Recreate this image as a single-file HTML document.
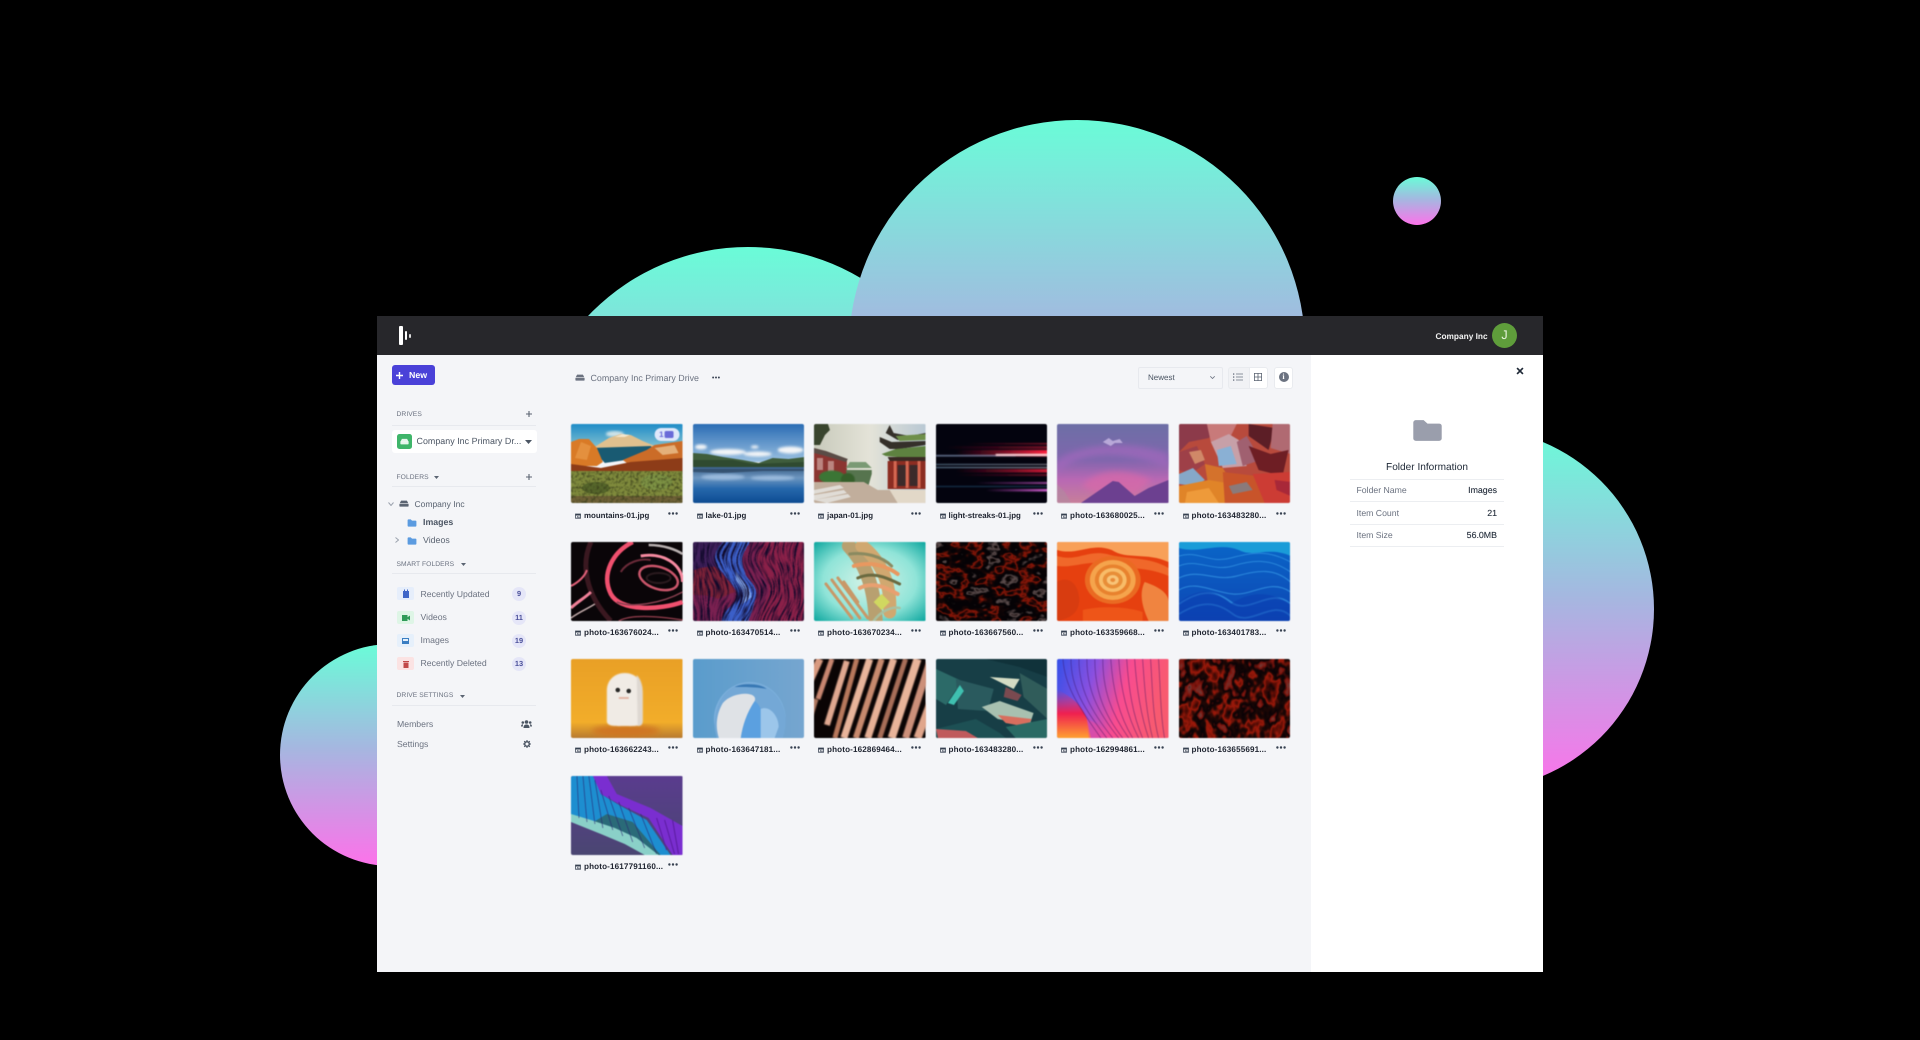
<!DOCTYPE html>
<html lang="en"><head><meta charset="utf-8"><title>Drive</title>
<style>
*{box-sizing:border-box;margin:0;padding:0}
html,body{width:1920px;height:1040px;overflow:hidden;background:#000;font-family:"Liberation Sans",sans-serif;text-rendering:geometricPrecision}
.o{position:absolute;border-radius:50%;background:linear-gradient(180deg,#6afcd8 0%,#a4b8e0 46%,#fd72ea 100%)}
.app{position:absolute;left:377px;top:316px;width:1166px;height:656px;background:#f4f5f8;overflow:hidden;filter:blur(.3px)}
.hd{position:absolute;left:0;top:0;width:1166px;height:39px;background:#27272b}
.rp{position:absolute;left:934px;top:39px;width:232px;height:617px;background:#fff}
.t{position:absolute;white-space:nowrap;line-height:12px;height:12px}
.a{position:absolute}
.g{color:#6b7280;font-size:6.7px;letter-spacing:.08px}
.l{position:absolute;left:15px;width:144px;height:1px;background:#e7e9ee}
.ln{position:absolute;left:973px;width:154px;height:1px;background:#eceef1}
.v{color:#1f2937;font-size:8.8px;text-align:right;right:46px;-webkit-text-stroke:.1px #1f2937}
.b{position:absolute;left:135px;width:14px;height:14px;border-radius:50%;background:#e5e6f8;color:#4a4f9a;font-size:7.4px;font-weight:bold;line-height:14px;text-align:center}
.ib{position:absolute;left:20px;width:17px;height:13px;border-radius:2px}
.c{position:absolute;width:111.5px;height:100px}
.th{position:absolute;left:0;top:0;width:111.5px;height:79px;border-radius:2px;display:block;filter:blur(.45px)}
.c b{position:absolute;left:13px;top:85.5px;line-height:12px;font-size:7.9px;color:#1f2430;white-space:nowrap}
.c b.p{font-size:8.1px;letter-spacing:.14px;left:13px}
.c svg.ic{position:absolute;left:4px;top:88.5px;width:6px;height:6px}
.c svg.dt{position:absolute;left:97px;top:87.5px;width:10px;height:3px}
</style></head>
<body>
<svg width="0" height="0" style="position:absolute">
<defs>
<symbol id="im" viewBox="0 0 12 12"><path d="M1 2h10v8.500H1z" fill="none" stroke="#374151" stroke-width="1.500"/><path d="M1 2h10v3H1zM3 9l2.500-3 2 2 1-1 2 2z" fill="#374151"/></symbol>
<symbol id="dd" viewBox="0 0 10 3"><circle cx="1.400" cy="1.500" r="1.200" fill="#374151"/><circle cx="5" cy="1.500" r="1.200" fill="#374151"/><circle cx="8.600" cy="1.500" r="1.200" fill="#374151"/></symbol>
<symbol id="fo" viewBox="0 0 24 20"><path d="M1 3a2 2 0 012-2h6l3 3h9a2 2 0 012 2v11a2 2 0 01-2 2H3a2 2 0 01-2-2z"/></symbol>
<symbol id="dr" viewBox="0 0 24 16"><path d="M5 1h14l4 8v5a1.500 1.500 0 01-1.500 1.500h-19A1.500 1.500 0 011 14V9z"/><path d="M1 8.500h22" stroke="#f4f5f8" stroke-width="1.500"/></symbol>
<linearGradient id="sk1" x1="0" y1="0" x2="0" y2="1"><stop offset="0" stop-color="#1f8cc8"/><stop offset="1" stop-color="#9dcfd2"/></linearGradient>
<linearGradient id="sk2" x1="0" y1="0" x2="0" y2="1"><stop offset="0" stop-color="#2a6cb4"/><stop offset="1" stop-color="#9cc2e2"/></linearGradient>
<linearGradient id="sk3" x1="0" y1="0" x2="1" y2="0"><stop offset="0" stop-color="#c8cabb"/><stop offset=".5" stop-color="#e4e3d8"/><stop offset="1" stop-color="#b9c8d4"/></linearGradient>
<linearGradient id="wa2" x1="0" y1="0" x2="0" y2="1"><stop offset="0" stop-color="#3a5f88"/><stop offset=".3" stop-color="#6d96c0"/><stop offset=".6" stop-color="#2668ac"/><stop offset="1" stop-color="#0d4c92"/></linearGradient>
<linearGradient id="rd" x1="0" y1="0" x2="1" y2="0"><stop offset="0" stop-color="#d01030" stop-opacity="0"/><stop offset="1" stop-color="#ff2040"/></linearGradient>
<linearGradient id="pk" x1="0" y1="0" x2="1" y2="0"><stop offset="0" stop-color="#c040c0" stop-opacity="0"/><stop offset="1" stop-color="#d060d0"/></linearGradient>
<linearGradient id="bl" x1="0" y1="0" x2="1" y2="0"><stop offset="0" stop-color="#90c0e0"/><stop offset="1" stop-color="#e0e0f0"/></linearGradient>
<linearGradient id="pu" x1="0" y1="0" x2="0" y2="1"><stop offset="0" stop-color="#6d6fa6"/><stop offset=".45" stop-color="#7f66ad"/><stop offset=".7" stop-color="#b868b4"/><stop offset="1" stop-color="#c77f9a"/></linearGradient>
<radialGradient id="te" cx=".5" cy=".5" r=".7"><stop offset="0" stop-color="#d8f4e8"/><stop offset=".6" stop-color="#90e4d8"/><stop offset="1" stop-color="#0fa8a0"/></radialGradient>
<linearGradient id="ye" x1="0" y1="0" x2="0" y2="1"><stop offset="0" stop-color="#e9a026"/><stop offset=".8" stop-color="#f2ad2a"/><stop offset="1" stop-color="#b87a30"/></linearGradient>
<linearGradient id="sb" x1="0" y1="0" x2="1" y2="0"><stop offset="0" stop-color="#5a9ccc"/><stop offset="1" stop-color="#76a6d0"/></linearGradient>
<linearGradient id="ra" x1="0" y1="0" x2="1" y2=".2"><stop offset="0" stop-color="#3550e8"/><stop offset=".35" stop-color="#8a50e0"/><stop offset=".65" stop-color="#f84c90"/><stop offset="1" stop-color="#f85a70"/></linearGradient>
<linearGradient id="ra2" x1="0" y1="0" x2="0" y2="1"><stop offset="0" stop-color="#e83060" stop-opacity="0"/><stop offset=".5" stop-color="#f02050"/><stop offset="1" stop-color="#ffa030"/></linearGradient>
<linearGradient id="vi" x1="0" y1="0" x2="0" y2="1"><stop offset="0" stop-color="#5a3c8e"/><stop offset="1" stop-color="#4a4672"/></linearGradient>
<linearGradient id="st" x1="0" y1="0" x2="0" y2="1"><stop offset="0" stop-color="#0a66c8"/><stop offset="1" stop-color="#0e46b4"/></linearGradient>
<filter id="lava" x="0" y="0" width="1" height="1" color-interpolation-filters="sRGB"><feTurbulence type="fractalNoise" baseFrequency=".06 .09" numOctaves="3" seed="4"/><feColorMatrix type="matrix" values="1 0 0 0 0 1 0 0 0 0 1 0 0 0 0 0 0 0 0 1"/><feComponentTransfer><feFuncR type="table" tableValues="0 0 .02 .1 .55 .08 .02 .02 .36 .05 0 0"/><feFuncG type="table" tableValues="0 0 .01 .02 .09 .02 .01 .01 .3 .02 0 0"/><feFuncB type="table" tableValues="0 0 .02 .02 .03 .02 .02 .02 .3 .02 0 0"/></feComponentTransfer></filter>
<filter id="lav2" x="0" y="0" width="1" height="1" color-interpolation-filters="sRGB"><feTurbulence type="fractalNoise" baseFrequency=".07 .05" numOctaves="3" seed="11"/><feColorMatrix type="matrix" values="1 0 0 0 0 1 0 0 0 0 1 0 0 0 0 0 0 0 0 1"/><feComponentTransfer><feFuncR type="table" tableValues="0 .03 .1 .35 .62 .12 .04 .5 .45 .12 .05"/><feFuncG type="table" tableValues="0 0 .02 .05 .1 .03 .01 .08 .22 .02 0"/><feFuncB type="table" tableValues="0 0 .02 .02 .04 .02 .02 .05 .2 .02 0"/></feComponentTransfer></filter>
<filter id="fib" x="0" y="0" width="1" height="1" color-interpolation-filters="sRGB"><feTurbulence type="fractalNoise" baseFrequency=".5 .05" numOctaves="2" seed="7" result="n"/><feColorMatrix in="n" type="matrix" values="0 0 0 0 .06  0 0 0 0 .03  0 0 0 0 .16  3.500 0 0 0 -1.500" result="a"/><feMerge result="m"><feMergeNode in="SourceGraphic"/><feMergeNode in="a"/></feMerge><feTurbulence type="fractalNoise" baseFrequency=".03" numOctaves="1" seed="5" result="d"/><feDisplacementMap in="m" in2="d" scale="28" xChannelSelector="R" yChannelSelector="G"/></filter>
<filter id="veg" x="0" y="0" width="1" height="1" color-interpolation-filters="sRGB"><feTurbulence type="fractalNoise" baseFrequency=".35" numOctaves="2" seed="2" result="n"/><feColorMatrix in="n" type="matrix" values="0 0 0 0 .22  0 0 0 0 .24  0 0 0 0 .1  2.200 0 0 0 -.95" result="a"/><feMerge><feMergeNode in="SourceGraphic"/><feMergeNode in="a"/></feMerge></filter>
<filter id="b"><feGaussianBlur stdDeviation=".45"/></filter>
<filter id="bb"><feGaussianBlur stdDeviation="1.200"/></filter>
<filter id="b3"><feGaussianBlur stdDeviation="3"/></filter>
</defs>
</svg>

<div class="o" style="left:528px;top:247px;width:440px;height:440px"></div>
<div class="o" style="left:849px;top:120px;width:456px;height:456px"></div>
<div class="o" style="left:1393px;top:177px;width:48px;height:48px"></div>
<div class="o" style="left:280px;top:644px;width:222px;height:222px"></div>
<div class="o" style="left:1292px;top:428px;width:362px;height:362px"></div>

<div class="app">
<div class="hd">
<div class="a" style="left:22px;top:10px;width:3.500px;height:19px;background:#fff;border-radius:1px"></div>
<div class="a" style="left:28px;top:15px;width:2px;height:9px;background:#fff;border-radius:1px"></div>
<div class="a" style="left:32px;top:17.500px;width:1.800px;height:4px;background:#ddd;border-radius:1px"></div>
<span class="t" style="left:1058.500px;top:13.500px;font-size:8.300px;font-weight:bold;color:#f1f1f1">Company Inc</span>
<div class="a" style="left:1115px;top:6.500px;width:25px;height:25px;border-radius:50%;background:#5f9d3b;color:#e8f4dc;font-size:12.500px;line-height:25px;text-align:center">J</div>
</div>

<!-- sidebar -->
<div class="a" style="left:15px;top:49px;width:43px;height:20px;background:#4a41d8;border-radius:3px;color:#fff;font-size:8.800px;font-weight:bold;line-height:20px;padding-left:17px">New</div>
<svg class="a" style="left:19px;top:55.500px;width:7px;height:7px" viewBox="0 0 7 7"><path d="M3.500 0v7M0 3.500h7" stroke="#fff" stroke-width="1.400"/></svg>

<span class="t g" style="left:19.500px;top:93px">DRIVES</span>
<svg class="a" style="left:149px;top:95px;width:6px;height:6px" viewBox="0 0 6 6"><path d="M3 0v6M0 3h6" stroke="#5b6472" stroke-width="1.100"/></svg>
<div class="l" style="top:109px"></div>
<div class="a" style="left:15px;top:114px;width:145px;height:23px;background:#fff;border-radius:3px"></div>
<div class="a" style="left:20px;top:118px;width:15px;height:15px;background:#3fb56a;border-radius:2.500px"></div>
<svg class="a" style="left:23px;top:122px;width:9px;height:7px" viewBox="0 0 24 16" fill="#e6f6ec"><use href="#dr"/></svg>
<span class="t" style="left:39.500px;top:119px;font-size:8.900px;color:#4b5563;letter-spacing:.03px">Company Inc Primary Dr...</span>
<svg class="a" style="left:148px;top:123.500px;width:7px;height:4px" viewBox="0 0 7 4"><path d="M0 0h7L3.500 4z" fill="#4b5563"/></svg>

<span class="t g" style="left:19.500px;top:155.500px">FOLDERS</span>
<svg class="a" style="left:56.500px;top:159.500px;width:5px;height:3px" viewBox="0 0 5 3"><path d="M0 0h5L2.500 3z" fill="#5b6472"/></svg>
<svg class="a" style="left:149px;top:157.500px;width:6px;height:6px" viewBox="0 0 6 6"><path d="M3 0v6M0 3h6" stroke="#5b6472" stroke-width="1.100"/></svg>
<div class="l" style="top:170px"></div>

<svg class="a" style="left:11px;top:186px;width:6px;height:4px" viewBox="0 0 6 4"><path d="M.5.5L3 3.500 5.500.5" fill="none" stroke="#9ca3af"/></svg>
<svg class="a" style="left:22px;top:183.500px;width:10px;height:7px" fill="#5b6472"><use href="#dr"/></svg>
<span class="t" style="left:37.500px;top:181.500px;font-size:8.500px;color:#5b6472">Company Inc</span>
<svg class="a" style="left:30px;top:203px;width:10px;height:8px" fill="#5b9be0"><use href="#fo"/></svg>
<span class="t" style="left:46px;top:200px;font-size:8.800px;font-weight:bold;color:#4b5563">Images</span>
<svg class="a" style="left:18px;top:221px;width:4px;height:6px" viewBox="0 0 4 6"><path d="M.5.5L3.500 3 .5 5.500" fill="none" stroke="#9ca3af"/></svg>
<svg class="a" style="left:30px;top:221px;width:10px;height:8px" fill="#5b9be0"><use href="#fo"/></svg>
<span class="t" style="left:46px;top:218px;font-size:8.800px;color:#5b6472">Videos</span>

<span class="t g" style="left:19.500px;top:242.500px">SMART FOLDERS</span>
<svg class="a" style="left:83.500px;top:247px;width:5px;height:3px" viewBox="0 0 5 3"><path d="M0 0h5L2.500 3z" fill="#5b6472"/></svg>
<div class="l" style="top:257px"></div>

<div class="ib" style="top:271px;background:#e6eefb"></div>
<svg class="a" style="left:25.500px;top:273px;width:6px;height:9px" viewBox="0 0 6 9"><path d="M0 2h6v7H0zM1 .5h1v2H1zM4 .5h1v2H4z" fill="#3f66c8"/></svg>
<span class="t" style="left:43.500px;top:271.500px;font-size:8.700px;color:#6b7280">Recently Updated</span>
<div class="b" style="top:271px">9</div>

<div class="ib" style="top:295px;background:#def5e6"></div>
<svg class="a" style="left:24.500px;top:298.500px;width:8px;height:6px" viewBox="0 0 8 6"><path d="M0 0h5.500v6H0zM5.500 2.200L8 .5v5L5.500 3.800z" fill="#2f9a58"/></svg>
<span class="t" style="left:43.500px;top:295px;font-size:8.700px;color:#6b7280">Videos</span>
<div class="b" style="top:294.500px">11</div>

<div class="ib" style="top:318px;background:#e6f0fb"></div>
<svg class="a" style="left:25px;top:321.500px;width:7px;height:6px" viewBox="0 0 12 12"><path d="M0 1h12v10H0z" fill="none" stroke="#3a7ec2" stroke-width="2"/><path d="M1 6h10v5H1z" fill="#3a7ec2"/></svg>
<span class="t" style="left:43.500px;top:318px;font-size:8.700px;color:#6b7280">Images</span>
<div class="b" style="top:317.500px">19</div>

<div class="ib" style="top:341px;background:#fbe3e3"></div>
<svg class="a" style="left:25.500px;top:343.500px;width:6px;height:8px" viewBox="0 0 6 8"><path d="M0 1h6v1H0zM.5 2.500h5V8h-5z" fill="#c24848"/></svg>
<span class="t" style="left:43.500px;top:341px;font-size:8.700px;color:#6b7280">Recently Deleted</span>
<div class="b" style="top:340.500px">13</div>

<span class="t g" style="left:19.500px;top:374px">DRIVE SETTINGS</span>
<svg class="a" style="left:82.500px;top:378.500px;width:5px;height:3px" viewBox="0 0 5 3"><path d="M0 0h5L2.500 3z" fill="#5b6472"/></svg>
<div class="l" style="top:389px"></div>
<span class="t" style="left:20px;top:401.500px;font-size:8.700px;color:#6b7280">Members</span>
<svg class="a" style="left:143.500px;top:403.500px;width:11px;height:8px" viewBox="0 0 11 8" fill="#4b5563"><circle cx="5.500" cy="2" r="1.800"/><circle cx="1.800" cy="2.500" r="1.300"/><circle cx="9.200" cy="2.500" r="1.300"/><path d="M2.500 8c0-2.500 1-3.500 3-3.500s3 1 3 3.500zM0 6.500C0 5 .8 4.300 2 4.300l-.2 2.200zM11 6.500c0-1.500-.8-2.200-2-2.200l.2 2.200z"/></svg>
<span class="t" style="left:20px;top:422px;font-size:8.700px;color:#6b7280">Settings</span>
<svg class="a" style="left:145.500px;top:423.500px;width:8px;height:8px" viewBox="0 0 8 8"><path d="M4 0v8M0 4h8M1.200 1.200l5.600 5.600M6.800 1.200L1.200 6.800" stroke="#4b5563" stroke-width="1.100"/><circle cx="4" cy="4" r="2.300" fill="#f4f5f8" stroke="#4b5563" stroke-width="1.500"/></svg>

<!-- breadcrumb -->
<svg class="a" style="left:198px;top:58px;width:10px;height:7px" fill="#6b7280"><use href="#dr"/></svg>
<span class="t" style="left:213.500px;top:55.500px;font-size:8.900px;color:#6b7280">Company Inc Primary Drive</span>
<svg class="a" style="left:335px;top:59.500px;width:8px;height:3px"><use href="#dd"/></svg>

<!-- toolbar -->
<div class="a" style="left:761px;top:50.500px;width:85px;height:22px;border:1px solid #e7e9ee;border-radius:2px;background:#f4f5f8"></div>
<span class="t" style="left:771px;top:55.500px;font-size:8px;color:#4b5563">Newest</span>
<svg class="a" style="left:832.500px;top:60px;width:5px;height:3px" viewBox="0 0 5 3"><path d="M.3.3L2.500 2.500 4.700.3" fill="none" stroke="#6b7280" stroke-width=".8"/></svg>
<div class="a" style="left:851px;top:50.500px;width:21px;height:22px;border:1px solid #e9ebef;border-right:0;border-radius:3px 0 0 3px;background:#f1f2f5"></div>
<div class="a" style="left:872px;top:50.500px;width:19px;height:22px;border:1px solid #e9ebef;border-radius:0 3px 3px 0;background:#fff"></div>
<svg class="a" style="left:856px;top:57px;width:10px;height:8px" viewBox="0 0 10 8"><path d="M3 1h7M3 4h7M3 7h7" stroke="#6b7280" stroke-width=".8"/><path d="M0 .4h1.300v1.300H0zM0 3.400h1.300v1.300H0zM0 6.400h1.300v1.300H0z" fill="#6b7280"/></svg>
<svg class="a" style="left:877px;top:57px;width:8px;height:8px" viewBox="0 0 8 8"><path d="M.4.4h7.200v7.200H.4zM4 .4v7.200M.4 4h7.200" fill="none" stroke="#5b6472" stroke-width=".8"/></svg>
<div class="a" style="left:897px;top:50.500px;width:19px;height:22px;border:1px solid #e9ebef;border-radius:3px;background:#fff"></div>
<div class="a" style="left:901.500px;top:56px;width:10px;height:10px;border-radius:50%;background:#6b7280;color:#fff;font:bold 8px/10px 'Liberation Serif',serif;text-align:center">i</div>

<!-- right panel -->
<div class="rp"></div>
<svg class="a" style="left:1138.500px;top:50.500px;width:8px;height:8px" viewBox="0 0 9 9"><path d="M1.200 1.200l6.600 6.600M7.800 1.200L1.200 7.800" stroke="#1f2937" stroke-width="1.900"/></svg>
<svg class="a" style="left:1034.500px;top:102.500px;width:31px;height:23px" viewBox="0 0 24 20" fill="#9a9eac" preserveAspectRatio="none"><use href="#fo"/></svg>
<span class="t" style="left:973px;width:154px;text-align:center;top:145.500px;font-size:10.100px;color:#1f2937">Folder Information</span>
<div class="ln" style="top:163px"></div><div class="ln" style="top:185px"></div><div class="ln" style="top:208px"></div><div class="ln" style="top:230px"></div>
<span class="t" style="left:979.500px;top:168px;font-size:8.700px;color:#6b7280">Folder Name</span>
<span class="t" style="left:979.500px;top:191px;font-size:8.700px;color:#6b7280">Item Count</span>
<span class="t" style="left:979.500px;top:213px;font-size:8.700px;color:#6b7280">Item Size</span>
<span class="t v" style="top:168px">Images</span>
<span class="t v" style="top:191px">21</span>
<span class="t v" style="top:213px">56.0MB</span>
</div>

<!-- thumbnail grid, absolute to page -->
<div style="position:absolute;left:0;top:0;filter:blur(.25px)">

<div class="c" style="left:571px;top:424px">
<svg class="th" viewBox="0 0 112 79" preserveAspectRatio="none">
<rect width="112" height="30" fill="url(#sk1)"/>
<ellipse cx="44" cy="10" rx="9" ry="3" fill="#cfe3e8" filter="url(#bb)"/>
<path d="M22 24L38 14 50 10 60 11 72 17 84 22 112 17V32H22z" fill="#e0c08e"/>
<path d="M44 13l8-3 7 1-5 2z" fill="#f4e6cc"/>
<path d="M20 24L80 22 84 26 70 30 55 36 34 39z" fill="#195a72"/>
<path d="M0 18L8 15 18 15 26 24 32 38 26 42H0z" fill="#d97a26"/>
<path d="M10 18l10 4-4 14-12-2z" fill="#e89a48" opacity=".7"/>
<path d="M52 36L76 26 84 21 112 17V40L60 42z" fill="#cb6c28"/>
<path d="M84 24l20-3 4 8-16 2z" fill="#e4b07a"/>
<path d="M0 40L30 44 60 38 112 34V48L0 52z" fill="#8d3c18"/>
<g filter="url(#veg)"><rect y="47" width="112" height="32" fill="#7f8a3c"/><ellipse cx="25" cy="64" rx="14" ry="6" fill="#55652a"/><ellipse cx="86" cy="58" rx="16" ry="8" fill="#7d9244"/><rect y="72" width="112" height="7" fill="#6e6036"/></g>
<rect x="84" y="4" width="25" height="13" rx="6.500" fill="#dfe8fa"/>
<text x="88.500" y="13" font-size="8" font-weight="bold" fill="#6a6ad8" font-family="Liberation Sans">1</text>
<rect x="94" y="7" width="9" height="7" rx="1.500" fill="#6a6ad8"/>
</svg>
<svg class="ic"><use href="#im" width="6" height="6"/></svg><b>mountains-01.jpg</b><svg class="dt"><use href="#dd"/></svg></div>

<div class="c" style="left:692.500px;top:424px">
<svg class="th" viewBox="0 0 112 79" preserveAspectRatio="none">
<rect width="112" height="38" fill="url(#sk2)"/>
<g filter="url(#bb)" fill="#f4f6f8"><ellipse cx="8" cy="23" rx="6" ry="2.500"/><ellipse cx="35" cy="28" rx="18" ry="3"/><ellipse cx="65" cy="30" rx="14" ry="2.500"/><ellipse cx="98" cy="26" rx="13" ry="3.500"/><ellipse cx="62" cy="23" rx="4" ry="1.500"/></g>
<path d="M0 29L14 30 30 33 50 36 66 39 80 34 96 35 112 33V45H0z" fill="#3f5d3c"/>
<path d="M0 36h40l20 4 52-2v7H0z" fill="#2f4a30"/>
<rect y="43" width="112" height="36" fill="url(#wa2)"/>
<g filter="url(#bb)" fill="#a6c4e4" opacity=".8"><ellipse cx="30" cy="53" rx="22" ry="3"/><ellipse cx="80" cy="54" rx="22" ry="2.500"/></g>
<path d="M0 45h112v2H70l-40 2-30-1z" fill="#2c4460" opacity=".7"/>
</svg>
<svg class="ic"><use href="#im" width="6" height="6"/></svg><b>lake-01.jpg</b><svg class="dt"><use href="#dd"/></svg></div>

<div class="c" style="left:814px;top:424px">
<svg class="th" viewBox="0 0 112 79" preserveAspectRatio="none">
<rect width="112" height="79" fill="url(#sk3)"/>
<path d="M0 0h14l2 6-5 5-5 10H0z" fill="#39452e"/>
<path d="M0 26L20 32 33 36V58H0z" fill="#8b3531"/>
<path d="M0 24L12 27 34 35 32 38 8 31 0 29z" fill="#5a4c46"/>
<path d="M3 34h6v12H3zM14 37h6v11h-6z" fill="#d0a8a2" opacity=".7"/>
<path d="M32 46h26v4l-4 14H36z" fill="#56744e"/>
<path d="M36 38h16l6 6H32z" fill="#7a9a74"/>
<g filter="url(#b)"><ellipse cx="18" cy="53" rx="13" ry="6.500" fill="#3a7434"/><ellipse cx="34" cy="56" rx="7" ry="7" fill="#365f2c"/></g>
<path d="M76 1l4 8 16 3 16-3v3L84 16 72 9zM66 13l12 5 34-1v4l-26 4H76l-10-7z" fill="#35302a"/>
<path d="M82 12l30-2v6l-26 1z" fill="#6e8f4a"/>
<path d="M68 30l14-5 30-3v11H84l-12-1z" fill="#5e8240"/>
<path d="M74 33h38v4H76z" fill="#3a2a24"/>
<path d="M74 37h38v28H74z" fill="#8c2d22"/>
<path d="M80 37h3v27h-3zM92 37h3v27h-3zM104 37h3v27h-3z" fill="#d46852"/>
<path d="M84 41h8v21h-8zM96 41h8v21h-8z" fill="#3c2a2a"/>
<path d="M0 58h50l14 8 20 0 28 0v13H0z" fill="#c1ae9c"/>
<path d="M0 66l26-5 4 3-30 6zM0 71l30-5 3 3-33 7zM0 76l34-6 3 3-24 6z" fill="#e0dcd6"/>
<path d="M76 66h36v13H84z" fill="#e2d8c8"/>
</svg>
<svg class="ic"><use href="#im" width="6" height="6"/></svg><b>japan-01.jpg</b><svg class="dt"><use href="#dd"/></svg></div>

<div class="c" style="left:935.500px;top:424px">
<svg class="th" viewBox="0 0 112 79" preserveAspectRatio="none">
<rect width="112" height="79" fill="#03030e"/>
<g filter="url(#b)">
<rect x="30" y="19" width="82" height="1.500" fill="url(#rd)" opacity=".5"/>
<rect x="10" y="22" width="102" height="3" fill="url(#rd)" opacity=".45"/>
<rect x="20" y="26" width="92" height="6.500" fill="url(#rd)"/>
<rect y="31" width="80" height="1.400" fill="#8a9cc0" opacity=".8"/>
<rect x="60" y="30" width="52" height="2" fill="#ffd0d8"/>
<rect y="40" width="112" height="1" fill="url(#bl)" opacity=".6"/>
<rect y="43" width="112" height="1" fill="url(#bl)" opacity=".7"/>
<rect x="20" y="45" width="92" height="3.500" fill="url(#rd)" opacity=".8"/>
<rect x="20" y="50" width="92" height="2" fill="url(#rd)" opacity=".4"/>
<rect x="40" y="58" width="72" height="2" fill="url(#pk)" opacity=".7"/>
<rect y="62" width="112" height="1" fill="#24506e" opacity=".8"/>
<rect x="50" y="65" width="62" height="2.500" fill="url(#pk)"/>
</g>
</svg>
<svg class="ic"><use href="#im" width="6" height="6"/></svg><b>light-streaks-01.jpg</b><svg class="dt"><use href="#dd"/></svg></div>

<div class="c" style="left:1057px;top:424px">
<svg class="th" viewBox="0 0 112 79" preserveAspectRatio="none">
<rect width="112" height="79" fill="url(#pu)"/>
<g filter="url(#b3)"><path d="M0 50C20 28 60 24 112 44V30C70 14 20 22 0 36z" fill="#a868c0" opacity=".6"/><path d="M25 62C40 44 70 44 95 56L80 70H40z" fill="#d86aa8" opacity=".7"/></g>
<path d="M46 18l6-4 4 3 7-2 3 4-8 0-4 3z" fill="#c8b8e4" opacity=".8"/>
<path d="M24 79L56 57 62 58 78 72 92 64 112 56V79z" fill="#6c4090"/>
<path d="M0 60l8 8 6 11H0z" fill="#b08aa0" opacity=".6"/>
</svg>
<svg class="ic"><use href="#im" width="6" height="6"/></svg><b class="p">photo-163680025...</b><svg class="dt"><use href="#dd"/></svg></div>

<div class="c" style="left:1178.500px;top:424px">
<svg class="th" viewBox="0 0 112 79" preserveAspectRatio="none">
<rect width="112" height="79" fill="#b84a3c"/>
<path d="M0 0h40L30 14 10 18 0 28z" fill="#8c3a4a"/><path d="M28 0h30l-8 16-18 2z" fill="#c87a7a"/><path d="M70 0l26 4-6 22-20-14z" fill="#5c1e26"/><path d="M94 0h18v30L92 24z" fill="#b06a72"/>
<path d="M32 18l18-8 10 6 8 26-24 2z" fill="#c7a0a8"/><path d="M38 26l14-4 6 18-18 2z" fill="#8ab0d4"/><path d="M58 18l10-6 14 24-18 6z" fill="#a06070"/>
<path d="M70 22l22 8 18-4-6 26-24-6z" fill="#6e1e24"/>
<path d="M0 28l18-6 8 18-14 10-12-4z" fill="#9e4048"/><path d="M10 28l12-2 4 10-10 4z" fill="#d08868"/>
<path d="M0 50l14-6 12 12-10 6L0 60z" fill="#86a8c8"/><path d="M26 40l18 4 10 16-24 6z" fill="#d4722c"/>
<path d="M0 62l30-6 24 4-8 19H0z" fill="#e08428"/><path d="M44 48l34 4 10 27H46z" fill="#c8542a"/><path d="M74 50l38-2v31H86z" fill="#cc3c34"/>
<path d="M50 62l18-4 6 8-20 4z" fill="#8a7a7a"/><path d="M8 68l22-4 10 15H6z" fill="#ee9a3a"/><path d="M96 56l16 2v14l-14-6z" fill="#a82838"/>
</svg>
<svg class="ic"><use href="#im" width="6" height="6"/></svg><b class="p">photo-163483280...</b><svg class="dt"><use href="#dd"/></svg></div>

<!-- row 2 -->
<div class="c" style="left:571px;top:541.500px">
<svg class="th" viewBox="0 0 112 79" preserveAspectRatio="none">
<rect width="112" height="79" fill="#0a0508"/>
<g fill="none">
<ellipse cx="88" cy="36" rx="20" ry="11" stroke="#c9556a" stroke-width="2.500" transform="rotate(18 88 36)"/>
<ellipse cx="88" cy="36" rx="12" ry="5" stroke="#2a1a1e" stroke-width="2"/>
<path d="M62 0C42 10 30 32 40 52 50 70 90 68 112 60" stroke="#f0506e" stroke-width="4.500"/>
<path d="M70 14C92 10 112 22 112 40" stroke="#f68aa0" stroke-width="3"/>
<path d="M78 3C94 3 106 8 112 12" stroke="#b8b0b0" stroke-width="2.500"/>
<path d="M20 0C10 22 14 52 40 79" stroke="#3a1820" stroke-width="5"/>
<path d="M0 44C8 40 14 34 16 28" stroke="#e06078" stroke-width="2"/>
<path d="M0 66C6 60 14 56 20 50" stroke="#f08098" stroke-width="3"/>
<path d="M0 76C8 70 18 66 24 62" stroke="#c0a8a8" stroke-width="1.500"/>
<path d="M48 79C60 72 86 74 112 78" stroke="#8a3a48" stroke-width="1.500"/>
<path d="M46 60C60 66 90 62 112 50" stroke="#8a4050" stroke-width="1.500"/>
<path d="M50 30C56 20 70 16 80 18" stroke="#6a2a38" stroke-width="2"/>
</g>
</svg>
<svg class="ic"><use href="#im" width="6" height="6"/></svg><b class="p">photo-163676024...</b><svg class="dt"><use href="#dd"/></svg></div>

<div class="c" style="left:692.500px;top:541.500px">
<svg class="th" viewBox="0 0 112 79" preserveAspectRatio="none">
<g filter="url(#fib)"><rect x="-20" y="-20" width="152" height="119" fill="#7a2050"/>
<rect x="-20" y="-20" width="54" height="60" fill="#40205c"/><rect x="70" y="-20" width="62" height="119" fill="#8a2048"/>
<path d="M34 -20L62 -20 54 30 64 99H28L38 50 28 24z" fill="#3b5fc8"/><path d="M-20 30L26 24 36 48 22 60-20 54z" fill="#7e2238"/><path d="M46 26l6 24-8 6-2-18z" fill="#7ea4ee"/></g>
</svg>
<svg class="ic"><use href="#im" width="6" height="6"/></svg><b class="p">photo-163470514...</b><svg class="dt"><use href="#dd"/></svg></div>

<div class="c" style="left:814px;top:541.500px">
<svg class="th" viewBox="0 0 112 79" preserveAspectRatio="none">
<rect width="112" height="79" fill="url(#te)"/>
<g fill="none" stroke-linecap="round">
<path d="M35 4C50 20 60 40 62 78" stroke="#b8a070" stroke-width="14"/>
<path d="M48 4C64 16 78 38 76 70" stroke="#d0a870" stroke-width="13"/>
<path d="M36 12C50 10 68 14 78 24" stroke="#8a8a60" stroke-width="3"/>
<path d="M40 24C55 20 70 22 84 32" stroke="#e89860" stroke-width="4"/>
<path d="M44 36C58 30 70 34 86 42" stroke="#6a6a40" stroke-width="3"/>
<path d="M46 46C58 40 70 44 84 52" stroke="#e8a070" stroke-width="4"/>
<g stroke="#c89868" stroke-width="3"><path d="M12 42L38 76"/><path d="M18 38L46 76"/><path d="M24 36L54 76"/><path d="M30 40L44 60"/></g>
<path d="M62 60l6-6 6 6-6 6z" fill="#d0d860" stroke="#d0d860" stroke-width="3"/>
<path d="M60 79C66 70 78 64 86 66" stroke="#a8c0a0" stroke-width="2.500"/>
</g>
</svg>
<svg class="ic"><use href="#im" width="6" height="6"/></svg><b class="p">photo-163670234...</b><svg class="dt"><use href="#dd"/></svg></div>

<div class="c" style="left:935.500px;top:541.500px">
<svg class="th" viewBox="0 0 112 79" preserveAspectRatio="none"><rect width="112" height="79" fill="#000" filter="url(#lava)"/></svg>
<svg class="ic"><use href="#im" width="6" height="6"/></svg><b class="p">photo-163667560...</b><svg class="dt"><use href="#dd"/></svg></div>

<div class="c" style="left:1057px;top:541.500px">
<svg class="th" viewBox="0 0 112 79" preserveAspectRatio="none">
<rect width="112" height="79" fill="#e6400f"/>
<path d="M0 0h112v20C90 10 70 18 55 8 35 0 20 14 0 8z" fill="#f8a058"/>
<path d="M0 14C20 20 30 8 50 12 70 18 92 14 112 26V34C90 24 70 28 50 22 30 18 18 26 0 24z" fill="#f0682a"/>
<path d="M0 40C10 34 20 40 22 54 24 68 16 76 0 79z" fill="#d83c10"/>
<path d="M88 40C100 44 112 50 112 60V79H92C86 66 82 52 88 40z" fill="#f08440"/>
<ellipse cx="56" cy="38" rx="28" ry="24" fill="#ea6a22"/>
<ellipse cx="56" cy="38" rx="23" ry="20" fill="#f5a44c"/>
<ellipse cx="56" cy="38" rx="18" ry="15.500" fill="#e8822e"/>
<ellipse cx="56" cy="38" rx="14" ry="12" fill="#f8bc68"/>
<ellipse cx="56" cy="38" rx="10" ry="8.500" fill="#e88e38"/>
<ellipse cx="56" cy="38" rx="6" ry="5" fill="#f8c478"/>
<ellipse cx="56" cy="38" rx="2.500" ry="2" fill="#e88a38"/>
<path d="M26 68C40 64 70 64 86 70V79H26z" fill="#ee5518"/>
</svg>
<svg class="ic"><use href="#im" width="6" height="6"/></svg><b class="p">photo-163359668...</b><svg class="dt"><use href="#dd"/></svg></div>

<div class="c" style="left:1178.500px;top:541.500px">
<svg class="th" viewBox="0 0 112 79" preserveAspectRatio="none">
<rect width="112" height="79" fill="url(#st)"/>
<path d="M0 0h112v14C90 4 75 16 60 8 40 0 20 12 0 6z" fill="#1a9cd8"/>
<g fill="none" stroke="#3fa8ee" stroke-opacity=".55">
<path d="M0 14C20 8 30 22 52 16S90 8 112 20" stroke-width="1"/>
<path d="M0 24C18 16 34 30 54 24S92 16 112 30" stroke-width="1"/>
<path d="M0 36C20 26 36 40 58 34S96 26 112 40" stroke-width="1.200"/>
<path d="M0 48C16 38 34 50 54 52S92 36 112 50" stroke-width="1.200"/>
<path d="M0 62C18 50 34 46 52 60S92 44 112 62" stroke-width="1.800"/>
<path d="M0 72C20 60 36 58 54 72S94 56 112 74" stroke-width="1.800"/>
</g>
<path d="M0 60C20 46 34 46 52 62 70 50 90 48 112 62V79H0z" fill="#0a3cb0" opacity=".5"/>
</svg>
<svg class="ic"><use href="#im" width="6" height="6"/></svg><b class="p">photo-163401783...</b><svg class="dt"><use href="#dd"/></svg></div>

<!-- row 3 -->
<div class="c" style="left:571px;top:658.500px">
<svg class="th" viewBox="0 0 112 79" preserveAspectRatio="none">
<rect width="112" height="79" fill="url(#ye)"/>
<ellipse cx="55" cy="72" rx="34" ry="6" fill="#cf7420" filter="url(#b3)"/>
<g filter="url(#b)"><path d="M36 32C36 8 72 8 72 32V62C72 68 62 67 54 67 46 67 36 68 36 62z" fill="#f0ebe5"/>
<path d="M66 16C72 22 72 30 72 40V62C72 66 70 67 67 67z" fill="#ded8d2"/></g>
<circle cx="47" cy="31" r="2.300" fill="#2a2a28"/><circle cx="58" cy="32" r="2.300" fill="#2a2a28"/>
<path d="M48 38h10v2H48z" fill="#e4b8a8"/>
</svg>
<svg class="ic"><use href="#im" width="6" height="6"/></svg><b class="p">photo-163662243...</b><svg class="dt"><use href="#dd"/></svg></div>

<div class="c" style="left:692.500px;top:658.500px">
<svg class="th" viewBox="0 0 112 79" preserveAspectRatio="none">
<rect width="112" height="79" fill="url(#sb)"/>
<ellipse cx="57" cy="60" rx="36" ry="37" fill="#7cb0dc"/>
<path d="M22 60C24 40 36 24 57 24 78 24 92 42 93 60 93 68 92 74 90 79H24C22 72 21 66 22 60z" fill="#74a8d6"/>
<path d="M30 44C40 32 66 32 62 42 54 54 50 66 48 79H26C22 66 24 54 30 44z" fill="#dfe2e6"/>
<path d="M62 42C70 48 72 60 68 79H48C50 66 54 54 62 42z" fill="#5ba0e0"/>
<path d="M68 50C76 46 86 56 86 68L82 79H68z" fill="#9cc6ea"/>
<path d="M42 28C48 24 68 24 74 30 66 28 50 28 42 28z" fill="#3878b4"/>
</svg>
<svg class="ic"><use href="#im" width="6" height="6"/></svg><b class="p">photo-163647181...</b><svg class="dt"><use href="#dd"/></svg></div>

<div class="c" style="left:814px;top:658.500px">
<svg class="th" viewBox="0 0 112 79" preserveAspectRatio="none">
<rect width="112" height="79" fill="#0a0404"/>
<g fill="none" filter="url(#b)">
<path d="M6 0L-4 22" stroke="#d89a80" stroke-width="7"/>
<path d="M18 0L4 40" stroke="#c88670" stroke-width="5"/>
<path d="M33 2L13 66" stroke="#e0a890" stroke-width="6"/>
<path d="M43 0L21 79" stroke="#b8785c" stroke-width="5"/>
<path d="M56 0L30 79" stroke="#e8b49a" stroke-width="7"/>
<path d="M68 0L42 79" stroke="#c88a6e" stroke-width="6"/>
<path d="M80 0L54 79" stroke="#e6b096" stroke-width="7"/>
<path d="M92 0L66 79" stroke="#a86e58" stroke-width="5"/>
<path d="M104 0L78 79" stroke="#e8b49a" stroke-width="8"/>
<path d="M116 4L92 79" stroke="#cc907a" stroke-width="7"/>
<path d="M120 36L104 79" stroke="#e0a68c" stroke-width="8"/>
<path d="M2 40L-6 66" stroke="#b07860" stroke-width="5"/>
</g>
</svg>
<svg class="ic"><use href="#im" width="6" height="6"/></svg><b class="p">photo-162869464...</b><svg class="dt"><use href="#dd"/></svg></div>

<div class="c" style="left:935.500px;top:658.500px">
<svg class="th" viewBox="0 0 112 79" preserveAspectRatio="none">
<rect width="112" height="79" fill="#173e46"/>
<path d="M0 0h112v18L84 8 50 0z" fill="#10323a"/>
<path d="M0 10L26 22 10 46 0 40z" fill="#2c6a68"/>
<path d="M20 20L58 30 52 52 22 50z" fill="#2a5a5e"/>
<path d="M24 26l-12 18 6 2 10-14z" fill="#3fc0b0"/>
<path d="M54 18L84 20 78 30z" fill="#d4dcc4"/>
<path d="M70 28l16 8-4 6-14-4z" fill="#7a4a50"/>
<path d="M84 14L112 30V60L88 38z" fill="#305c5a"/>
<path d="M46 48L64 42 98 54 94 66 62 60z" fill="#a8c0b0"/>
<path d="M62 56L96 60 92 68 70 64z" fill="#d86e5e"/>
<path d="M0 70l40 -10 24 14 6 5H0z" fill="#1d5054"/>
<path d="M0 70L30 72 42 79H2z" fill="#c05a5c"/>
<path d="M70 68l42 -8v19H80z" fill="#2a6a64"/>
</svg>
<svg class="ic"><use href="#im" width="6" height="6"/></svg><b class="p">photo-163483280...</b><svg class="dt"><use href="#dd"/></svg></div>

<div class="c" style="left:1057px;top:658.500px">
<svg class="th" viewBox="0 0 112 79" preserveAspectRatio="none">
<rect width="112" height="79" fill="url(#ra)"/>
<path d="M0 30C14 38 24 44 30 60L34 79H0z" fill="url(#ra2)"/>
<path d="M30 60C44 66 50 72 56 79H32z" fill="#f04a9a" opacity=".5"/>
<g fill="none" stroke="#3a1060" stroke-opacity=".45" stroke-width=".9">
<path d="M6 0C8 30 24 50 44 79"/><path d="M14 0C14 30 28 50 50 79"/><path d="M22 0C22 30 34 52 56 79"/><path d="M30 0C30 30 40 52 62 79"/><path d="M38 0C38 30 46 54 66 79"/><path d="M46 0C46 30 54 54 72 79"/><path d="M54 0C56 30 62 56 76 79"/><path d="M62 0C64 30 70 56 82 79"/><path d="M70 0C72 30 76 56 86 79"/><path d="M78 0C80 30 84 56 92 79"/><path d="M86 0C88 30 90 56 96 79"/><path d="M94 0C96 30 96 56 102 79"/><path d="M102 0C104 30 104 56 108 79"/>
</g>
</svg>
<svg class="ic"><use href="#im" width="6" height="6"/></svg><b class="p">photo-162994861...</b><svg class="dt"><use href="#dd"/></svg></div>

<div class="c" style="left:1178.500px;top:658.500px">
<svg class="th" viewBox="0 0 112 79" preserveAspectRatio="none"><rect width="112" height="79" fill="#000" filter="url(#lav2)"/></svg>
<svg class="ic"><use href="#im" width="6" height="6"/></svg><b class="p">photo-163655691...</b><svg class="dt"><use href="#dd"/></svg></div>

<!-- row 4 -->
<div class="c" style="left:571px;top:775.500px">
<svg class="th" viewBox="0 0 112 79" preserveAspectRatio="none">
<rect width="112" height="79" fill="url(#vi)"/>
<path d="M0 0h24L30 18 50 30 76 44 100 79H88L62 64 36 56 16 50 0 44z" fill="#1d8ed0"/>
<path d="M22 0L30 18 52 30 78 42 102 79H112V50L80 32 46 18 36 0z" fill="#7a2ed0"/>
<path d="M16 50L36 38 62 46 90 79H74L56 64 36 56z" fill="#2a6a78"/>
<path d="M0 38L20 44 44 52 66 62 88 79H74L54 68 30 58 0 46z" fill="#8ad0c8"/>
<g stroke="#2a2470" stroke-width=".8" opacity=".7"><path d="M6 0L8 42M12 0L16 46M18 0L24 48M24 4L32 52M30 14L42 54M38 20L52 60M48 26L62 66M58 32L74 72M70 38L86 78"/></g>
<g stroke="#5a1c9e" stroke-width="1"><path d="M86 42L96 74M94 44L104 78M102 44L108 78"/></g>
</svg>
<svg class="ic"><use href="#im" width="6" height="6"/></svg><b class="p">photo-1617791160...</b><svg class="dt"><use href="#dd"/></svg></div>

</div>
</body></html>
